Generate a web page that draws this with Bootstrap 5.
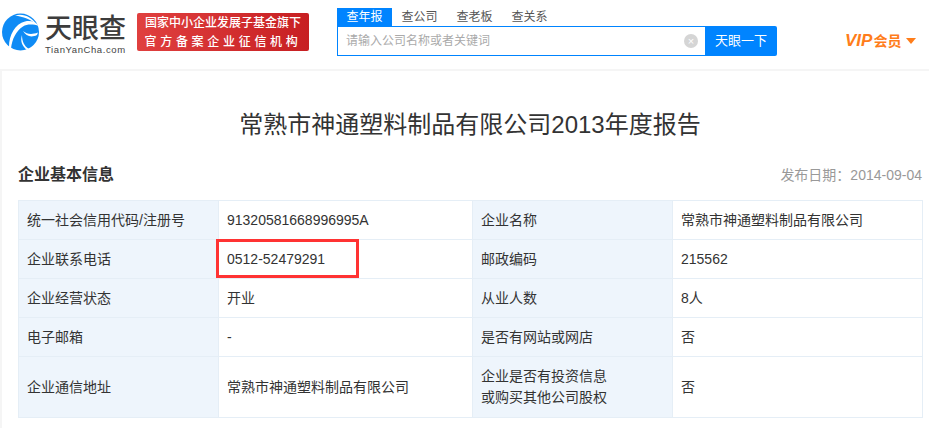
<!DOCTYPE html>
<html lang="zh-CN">
<head>
    <meta charset="UTF-8">
    <meta name="viewport" content="width=device-width, initial-scale=1">
    <title>企业年报</title>
    <link href="https://cdn.jsdelivr.net/npm/bootstrap@5.3.0/dist/css/bootstrap.min.css" rel="stylesheet">
    <style>
        html, body { height: 428px; overflow: hidden; }
        body { font-family: "Liberation Sans", "Noto Sans CJK SC", sans-serif; font-size: 13px; color: #333; background: #f5f5f5; }
        .top-bar { height: 69px; background: #fff; }
        .logo-box { width: 137px; }
        .logo-mark { margin-top: 13px; margin-left: 2px; }
        .logo-name { font-size: 27px; line-height: 30px; color: #3c3c3c; font-weight: 500; margin-top: 14px; margin-left: 6px; }
        .logo-url { font-size: 9.5px; line-height: 10px; color: #444; letter-spacing: .6px; margin-top: 1px; margin-left: 6px; }
        .banner { width: 172px; height: 38px; margin-top: 13px; border-radius: 2px; background: linear-gradient(90deg, #e0403f, #c71f22); color: #fff; text-align: center; font-size: 12px; line-height: 19px; font-weight: 500; padding-top: 1px; }
        .banner .spread { letter-spacing: 3.7px; font-size: 12px; }
        .search-box { width: 440px; margin-left: 28px; margin-top: 8px; }
        .search-tab { width: 55px; height: 18px; line-height: 18px; text-align: center; font-size: 12px; color: #555; }
        .search-tab.active { background: #0084ff; color: #fff; }
        .search-row { height: 30px; }
        .search-input { width: 368px; border: 1px solid #0084ff; border-right: 0; padding-left: 8px; color: #aaa; font-size: 12px; }
        .search-clear { width: 14px; height: 14px; border-radius: 50%; background: #d5d5d5; color: #fff; font-size: 11px; line-height: 14px; text-align: center; margin-right: 7px; }
        .search-btn { width: 72px; background: #0084ff; color: #fff; border-radius: 0 2px 2px 0; line-height: 30px; text-align: center; font-size: 13px; }
        .vip { margin-left: 68px; margin-top: 31px; color: #ff7d1a; font-weight: 700; font-size: 14px; line-height: 20px; }
        .vip i { font-size: 17px; margin-right: 1px; }
        .vip-caret { width: 0; height: 0; border-left: 5px solid transparent; border-right: 5px solid transparent; border-top: 6px solid #ff7d1a; margin-left: 5px; margin-top: 7px; }
        .report { margin: 2px 0 0 2px; height: 357px; background: #fff; padding: 0 7px 0 16px; }
        .report-title { font-size: 24px; line-height: 34px; padding-top: 37px; color: #333; font-weight: 400; margin: 0; box-sizing: content-box; height: 34px; }
        .section-head { margin-top: 19px; height: 28px; }
        .section-name { font-size: 16px; font-weight: 700; color: #333; line-height: 24px; margin: 0; }
        .publish-date { color: #999; font-size: 14px; line-height: 24px; }
        .info-table { width: 904px; table-layout: fixed; margin: 0; border-color: #e5eef6; margin-top: 11px; }
        .info-table td { padding: 0 8px; vertical-align: middle; height: 39px; line-height: 21px; font-size: 14px; color: #333; border: 1px solid #e5eef6; }
        .info-table td.label { background: #eef5fc; }
        .info-table tr.tall td { height: 61px; }
        .phone-cell { position: relative; }
        .phone-mark { position: absolute; left: -3px; top: -1px; width: 143px; height: 39px; border: 3px solid #f33; pointer-events: none; }
    </style>
</head>
<body>

    <!-- Header -->
    <div class="top-bar d-flex">
        <div class="logo-box d-flex flex-shrink-0">
            <svg width="37" height="38" viewBox="0 0 37 38" class="logo-mark flex-shrink-0">
                <circle cx="18.5" cy="19" r="18.5" fill="#0f8bf5"/>
                <path d="M13 2.5C21 0 30 4 35 12C29 6 21 4 13 2.5z" fill="#fff"/>
                <path d="M7 34C7 22 13 11 23 8.500C29 7 34 9 37 13C31 11 25 11 21 13.500C14 18 10 26 9 35.500z" fill="#fff"/>
                <path d="M21 18C25 21 29 22 36 19.500L35 22C29 25 24 23 21 18z" fill="#fff"/>
                <path d="M20 22C20 28 22 33 27 36L25 37C20 33 18 28 20 22z" fill="#fff"/>
            </svg>
            <div class="flex-shrink-0">
                <div class="logo-name text-nowrap">天眼查</div>
                <div class="logo-url text-nowrap">TianYanCha.com</div>
            </div>
        </div>
        <div class="banner flex-shrink-0">
            <div class="text-nowrap">国家中小企业发展子基金旗下</div>
            <div class="text-nowrap spread">官方备案企业征信机构</div>
        </div>
        <div class="search-box flex-shrink-0">
            <div class="d-flex">
                <div class="search-tab active">查年报</div>
                <div class="search-tab">查公司</div>
                <div class="search-tab">查老板</div>
                <div class="search-tab">查关系</div>
            </div>
            <div class="search-row d-flex">
                <div class="search-input d-flex align-items-center justify-content-between">
                    <span>请输入公司名称或者关键词</span>
                    <span class="search-clear">×</span>
                </div>
                <div class="search-btn">天眼一下</div>
            </div>
        </div>
        <div class="vip d-flex text-nowrap">
            <span><i>VIP</i>会员</span>
            <span class="vip-caret"></span>
        </div>
    </div>

    <!-- Report -->
    <div class="report">
        <h1 class="report-title text-center">常熟市神通塑料制品有限公司2013年度报告</h1>
        <div class="section-head d-flex justify-content-between align-items-center">
            <h2 class="section-name">企业基本信息</h2>
            <span class="publish-date">发布日期：2014-09-04</span>
        </div>
        <table class="table info-table">
            <colgroup>
                <col style="width:200px"><col style="width:254px"><col style="width:200px"><col style="width:250px">
            </colgroup>
            <tbody>
                <tr>
                    <td class="label">统一社会信用代码/注册号</td>
                    <td>91320581668996995A</td>
                    <td class="label">企业名称</td>
                    <td>常熟市神通塑料制品有限公司</td>
                </tr>
                <tr>
                    <td class="label">企业联系电话</td>
                    <td class="phone-cell">0512-52479291<span class="phone-mark"></span></td>
                    <td class="label">邮政编码</td>
                    <td>215562</td>
                </tr>
                <tr>
                    <td class="label">企业经营状态</td>
                    <td>开业</td>
                    <td class="label">从业人数</td>
                    <td>8人</td>
                </tr>
                <tr>
                    <td class="label">电子邮箱</td>
                    <td>-</td>
                    <td class="label">是否有网站或网店</td>
                    <td>否</td>
                </tr>
                <tr class="tall">
                    <td class="label">企业通信地址</td>
                    <td>常熟市神通塑料制品有限公司</td>
                    <td class="label">企业是否有投资信息<br>或购买其他公司股权</td>
                    <td>否</td>
                </tr>
            </tbody>
        </table>
    </div>

    <script src="https://cdn.jsdelivr.net/npm/bootstrap@5.3.0/dist/js/bootstrap.bundle.min.js"></script>
</body>
</html>
